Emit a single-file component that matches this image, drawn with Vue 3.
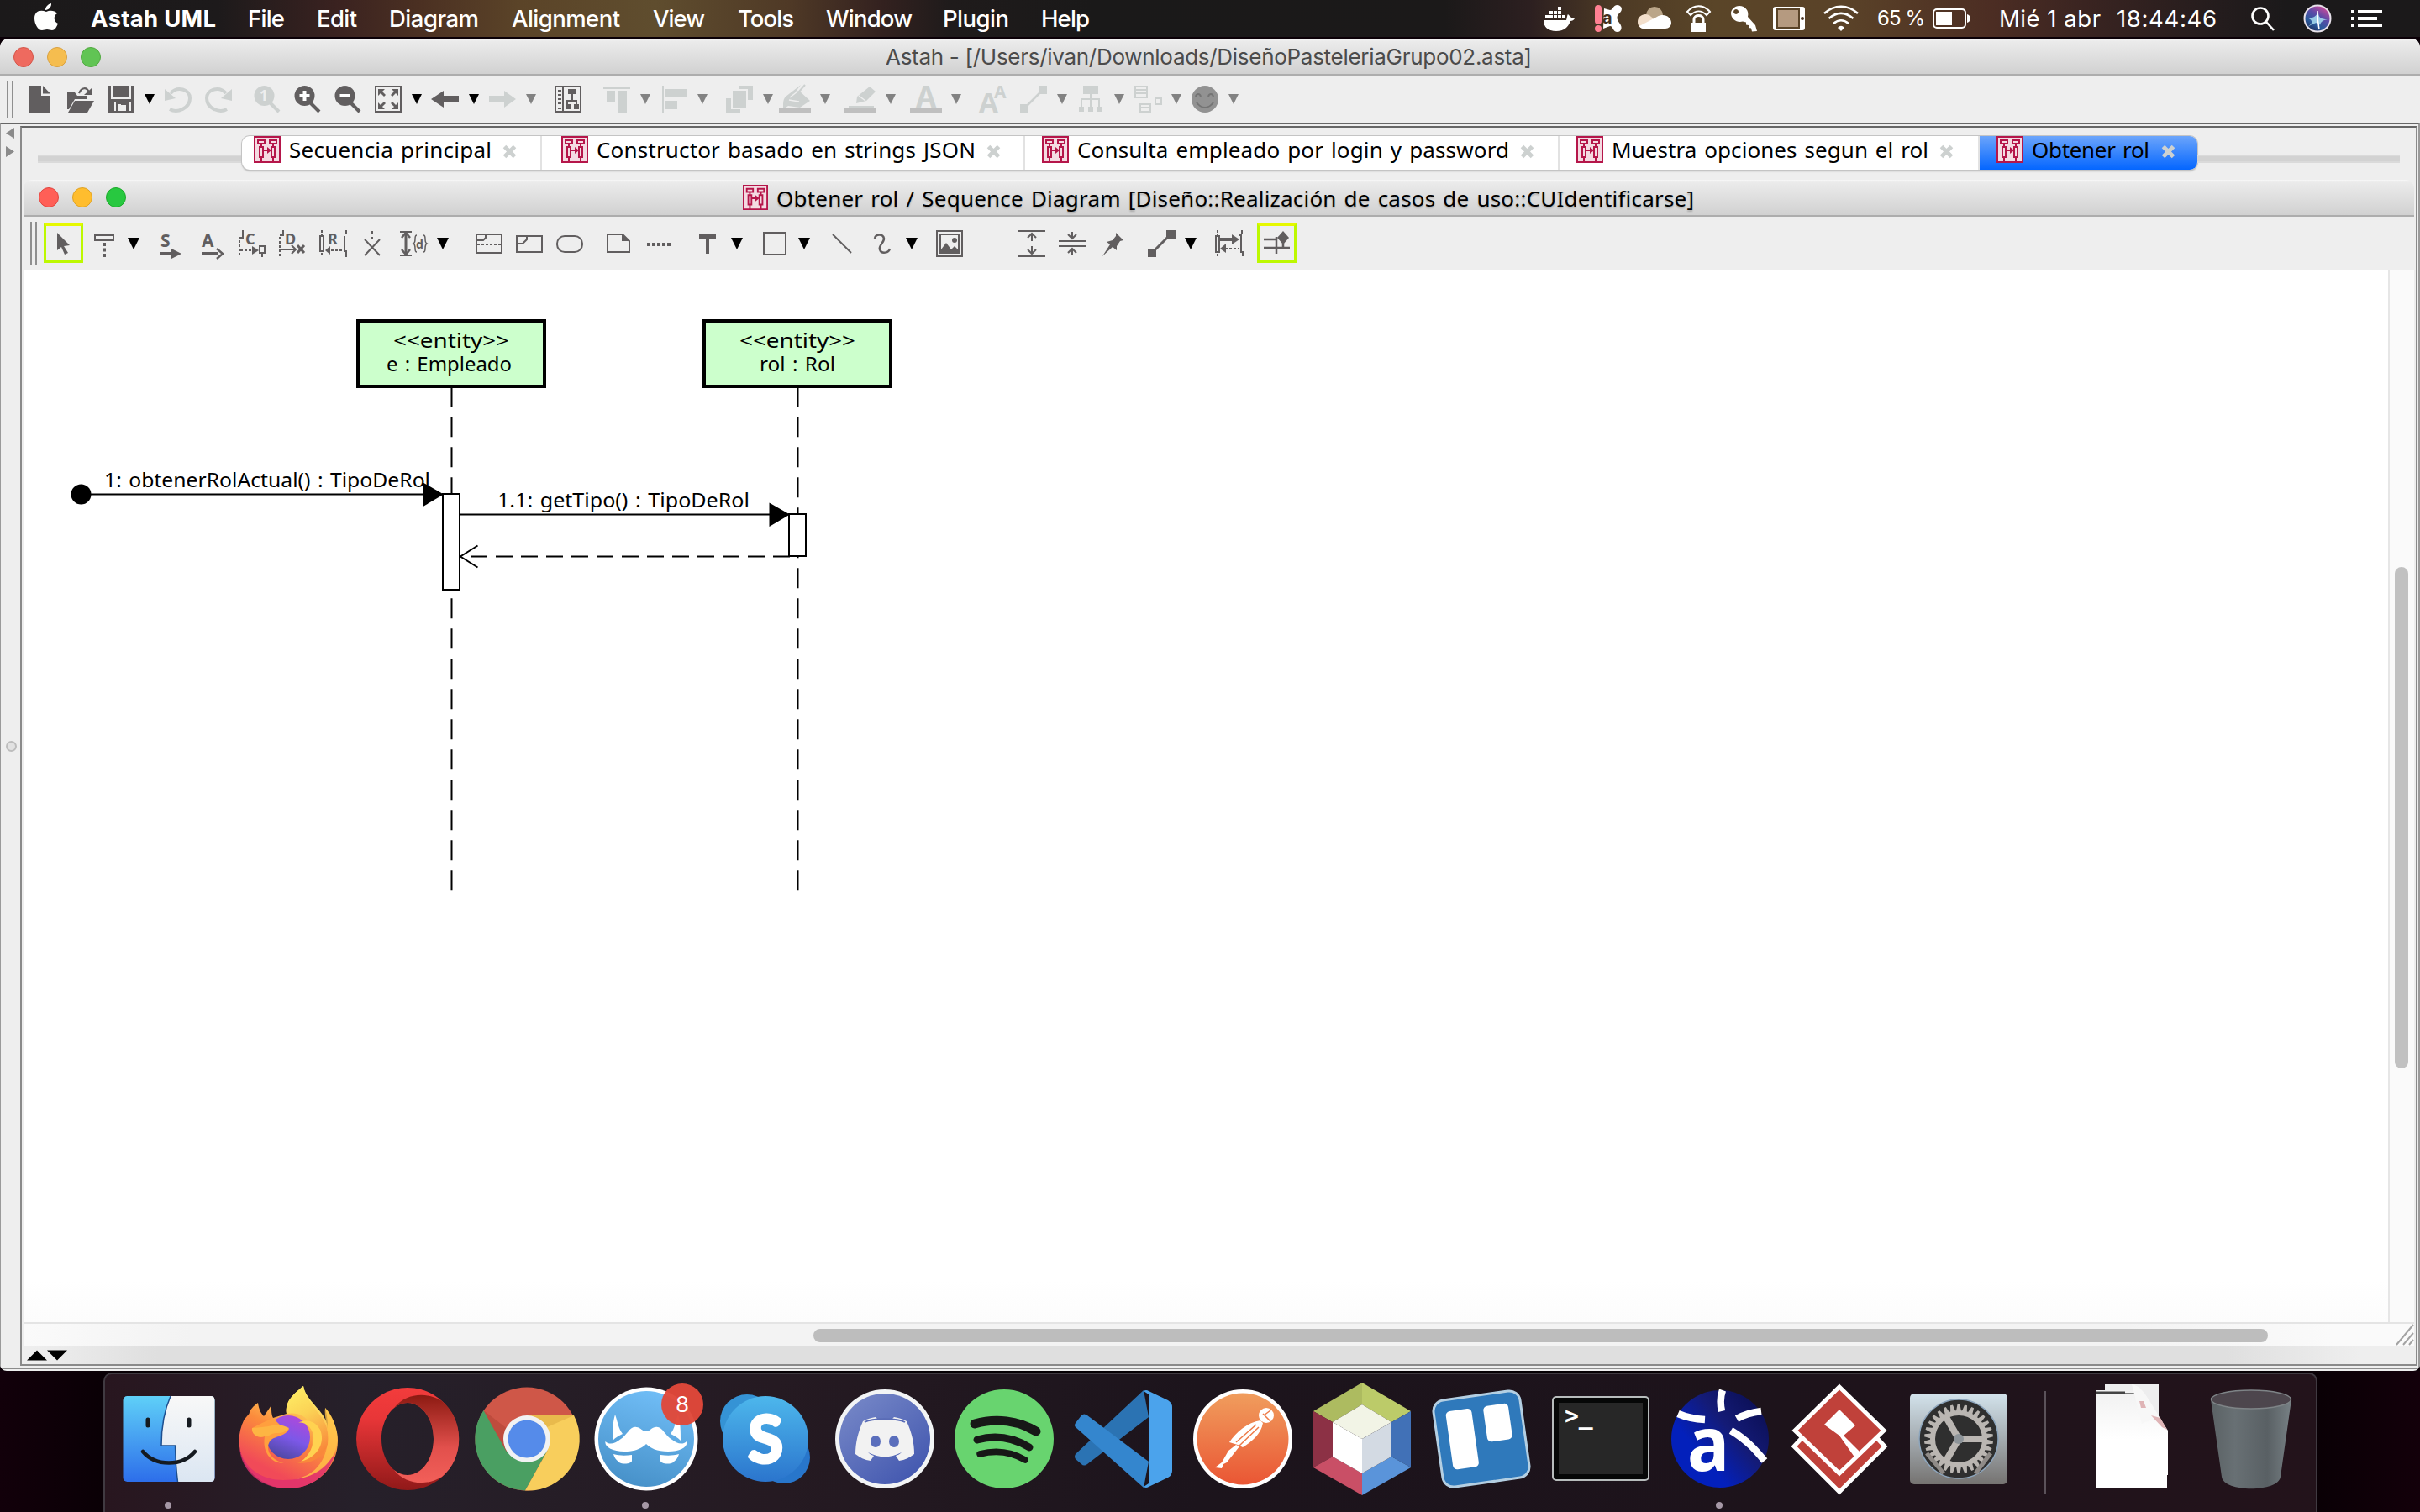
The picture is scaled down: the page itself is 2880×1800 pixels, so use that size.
<script setup>
const vFit = {
  mounted(el, { value }) {
    const chars = el.textContent.trim().length
    const natural = el.getBoundingClientRect().width
    el.style.letterSpacing = (value - natural) / (chars - 1) + 'px'
    el.style.width = value + 'px'
  },
}

// Turns [name, start, end, extra] rows into items with the gap to the previous one.
function flow(rows, origin) {
  let edge = origin
  return rows.map(([name, start, end, extra]) => {
    const item = { name, gap: start - edge, width: end - start, extra }
    edge = end
    return item
  })
}

const menus = flow([
  ['Astah UML', 108, 257, 'bold'], ['File', 295, 339], ['Edit', 377, 425], ['Diagram', 463, 570],
  ['Alignment', 609, 738], ['View', 777, 839], ['Tools', 878, 945], ['Window', 983, 1086],
  ['Plugin', 1122, 1201], ['Help', 1239, 1297],
], 69)

const status = flow([
  ['docker', 1836, 1874], ['avast', 1897, 1931], ['cloud', 1948, 1989], ['lock', 2006, 2037],
  ['key', 2059, 2091], ['display', 2110, 2148], ['wifi', 2170, 2212], ['65 %', 2234, 2291, 'small'],
  ['battery', 2299, 2347], ['Mié 1 abr', 2379, 2500, 'text'], ['18:44:46', 2519, 2638, 'text'],
  ['search', 2678, 2708], ['siri', 2741, 2775], ['list', 2798, 2835],
], 1297)

const W = '#fff'
const statusIcons = {
  docker: `<path fill="${W}" d="M1 24h27c1-3 1-6 2-7l4 4 4 1c-1 2-3 3-5 3-3 8-8 12-17 12C6 37 1 32 1 24zM3 18h4v4H3zM8 18h4v4H8zM13 18h4v4h-4zM18 18h4v4h-4zM8 13h4v4H8zM13 13h4v4h-4zM18 13h4v4h-4zM18 8h4v4h-4zM23 18h3v4h-3z"/>`,
  avast: `<rect x="1" y="6" width="8" height="23" rx="4" fill="#ff8092"/><circle cx="5" cy="34" r="4" fill="#ff8092"/><path fill="${W}" d="M12 10l7 2c4 0 3-6 9-6 6 1 6 6 3 9-5 4-4 8-1 12 5 6 2 11-2 11-6 0-5-7-9-7l-8 3z"/><text x="10" y="28" font-size="20" font-weight="700" fill="#44301f" font-family="Inter">a</text>`,
  cloud: `<circle cx="21" cy="18" r="10" fill="#bba689"/><path d="M1 26c0-8 10-12 16-6 7 3-4 13-10 14-4-1-6-4-6-8z" fill="#f3dfcb"/><path fill="${W}" d="M3 31l21-11c8-5 17 0 17 7 0 4-3 7-7 7H8c-2 0-4-1-5-3z"/>`,
  lock: `<g fill="none" stroke="${W}" stroke-width="2"><path d="M2 14c8-9 19-9 27 0l-4 4c-6-6-13-6-19 0z"/><path stroke-width="3" d="M10 28v-5c0-6 11-6 11 0v5"/></g><path fill="${W}" d="M7 27h17v11H7z"/>`,
  key: `<path fill="${W}" fill-rule="evenodd" d="M11 7c7 0 12 6 10 13l9 10 2 7-6 .5-1-4-3-.5v-3l-3-.5v-3l-4-1c-7 2-14-3-14-10C1 12 5 7 11 7zM7 11a3 3 0 1 0 .1 0z"/>`,
  display: `<path fill="${W}" fill-rule="evenodd" d="M3 8h32a3 3 0 0 1 3 3v22a3 3 0 0 1-3 3H3a3 3 0 0 1-3-3V11a3 3 0 0 1 3-3zm1 2v24h28V10z"/><rect x="6" y="12" width="24" height="20" fill="#b59a80"/><circle cx="35" cy="22" r="2" fill="#4a3525"/>`,
  wifi: `<g fill="none" stroke="${W}" stroke-width="2.6"><path d="M1 16C13 5 29 5 41 16M6.500 22C16 14 26 14 35.500 22M12 28C18 23 24 23 30 28"/></g><path fill="${W}" d="M17 33c3-3 5-3 8 0l-4 4z"/>`,
  battery: `<rect x="2" y="11" width="38" height="22" rx="4" fill="none" stroke="${W}" stroke-width="2"/><path fill="${W}" d="M5 14h19v16H5zM42 17c5 1 5 9 0 10z"/>`,
  search: `<g fill="none" stroke="${W}" stroke-width="2.600"><circle cx="12" cy="19" r="9.500"/><path d="M19 26l9 10"/></g>`,
  siri: `<circle cx="17" cy="22" r="15.500" fill="url(#siri)" stroke="#e7e1ea" stroke-width="2"/><path d="M5 21c7 1 10-1 13-7 0 7 3 9 11 9-6 1-8 3-9 7-2-4-5-4-15 2 6-4 8-7 0-11z" fill="#a8dff2" opacity=".85"/><path d="M17 13c0 8 0 12 2 22" stroke="#fff" stroke-width="1.500" fill="none"/>`,
  list: `<path fill="${W}" d="M0 12h4v4H0zM8 12h29v4H8zM0 20h4v4H0zM8 20h23v4H8zM0 28h4v4H0zM8 28h29v4H8z"/>`,
}

const D = '#615e5f'
const L = '#cdd1d0'
const caret = (c) => `<path fill="${c}" d="M0 10h12l-6 12z"/>`
const T = (x, y, s, c, t) => `<text x="${x}" y="${y}" font-size="${s}" font-weight="700" fill="${c}" font-family="Noto Sans, sans-serif">${t}</text>`
const lens = (c) => `<circle cx="12.500" cy="12" r="12" fill="${c}"/><path d="M19 20l11 11" stroke="${c}" stroke-width="4"/>`

const mainTools = flow([
  ['new', 34, 60], ['open', 80, 112], ['save', 128, 160], ['caret', 172, 184], ['undo', 196, 229],
  ['redo', 243, 276], ['zoom1', 302, 334], ['zoomIn', 350, 382], ['zoomOut', 398, 430], ['fit', 446, 478],
  ['caret', 490, 502], ['back', 513, 546], ['caret', 558, 570], ['forward', 582, 614], ['caretOff', 626, 638],
  ['structure', 660, 692], ['alignTop', 718, 750], ['caretOff', 762, 774], ['alignLeft', 788, 818],
  ['caretOff', 830, 842], ['stack', 864, 896], ['caretOff', 908, 920], ['bucket', 927, 965],
  ['caretOff', 976, 988], ['pen', 1005, 1043], ['caretOff', 1054, 1066], ['fontColor', 1083, 1121],
  ['caretOff', 1132, 1144], ['fonts', 1166, 1198], ['link', 1214, 1246], ['caretOff', 1258, 1270],
  ['tree', 1284, 1311], ['caretOff', 1326, 1338], ['boxes', 1350, 1383], ['caretOff', 1394, 1406],
  ['smile', 1418, 1450], ['caretOff', 1462, 1474],
], 16)

const mainIcons = {
  caret: caret('#000'),
  caretOff: caret('#828282'),
  new: `<path fill="${D}" d="M0 0h15v12h11v20H0zM17 0l9 9.500h-9z"/>`,
  open: `<path fill="${D}" d="M0 8h9l3 4h11v4H9L2 28H0zM9 18h23l-8 14H1z"/><path d="M14 9c3-7 9-8 12-1" fill="none" stroke="${D}" stroke-width="2.200"/><path fill="${D}" d="M29 3v8h-9z"/>`,
  save: `<path fill="${D}" fill-rule="evenodd" d="M0 0h4v16h24V0h4v32H0zM8 19v11h20V19z"/><path fill="${D}" d="M6 0h20v14H6zM10 20h16v12h-4v-9h-8v9h-4z"/><path fill="#eee" d="M13 22h3v8h-3z"/>`,
  undo: `<path d="M6 26c9 5 24-1 24-13C30 2 15-2 7 7" transform="translate(0 2)" fill="none" stroke="${L}" stroke-width="4"/><path fill="${L}" d="M0 4v14l13-3z"/>`,
  redo: `<path d="M27 26C18 31 3 25 3 13 3 2 18-2 26 7" transform="translate(0 2)" fill="none" stroke="${L}" stroke-width="4"/><path fill="${L}" d="M33 4v14l-13-3z"/>`,
  zoom1: lens(L) + T(7, 18, 17, '#eee', '1'),
  zoomIn: lens(D) + `<path d="M12.500 6v12M6.500 12h12" stroke="#fff" stroke-width="4"/>`,
  zoomOut: lens(D) + `<path d="M6.500 12h12" stroke="#fff" stroke-width="4"/>`,
  fit: `<rect x="1" y="1" width="30" height="30" fill="none" stroke="${D}" stroke-width="2"/><path fill="${D}" d="M4 4h8l-3 3 4 4-2 2-4-4-3 3zM28 4h-8l3 3-4 4 2 2 4-4 3 3zM4 28h8l-3-3 4-4-2-2-4 4-3-3zM28 28h-8l3-3-4-4 2-2 4 4 3-3z"/>`,
  back: `<path fill="${D}" d="M0 16L15 6v6h18v8H15v6z"/>`,
  forward: `<path fill="${L}" d="M32 16L18 6v6H0v8h18v6z"/>`,
  structure: `<path fill="none" stroke="${D}" stroke-width="2" d="M1 1h30v30H1zM10 1v30M4 6h4M4 11h4M4 16h4M4 21h4M4 27h4M21 9v9M15 23v-5h11v5"/><path fill="${D}" d="M16 4h10v6H16zM13 22h6v6h-6zM23 22h6v6h-6z"/>`,
  alignTop: `<path fill="${L}" d="M0 2h32v2H0zM4 6h10v14H4zM18 6h10v26H18z"/>`,
  alignLeft: `<path fill="${L}" d="M0 0h2v32H0zM4 4h26v10H4zM4 18h14v10H4z"/>`,
  stack: `<path fill="${L}" d="M15 0h17v17h-6V4H15zM8 6h16v20H8zM0 15h6v13h11v4H0z"/>`,
  bucket: `<path fill="#bfbfbf" d="M0 27h38v6H0z"/><path fill="${L}" d="M5 26c0-6 0-10 3-13L26-1l-6 8 4-1 13 12-12 8-14-2-3 2z"/><path fill="none" stroke="#eee" stroke-width="1.500" d="M13 14l9-7M26 1l5 7M12 17l12 2"/><path fill="none" stroke="${L}" stroke-width="2" d="M31-1l-7 8"/>`,
  pen: `<path fill="#bfbfbf" d="M0 27h38v6H0z"/><path fill="${L}" d="M5 24h30v2H5zM14 21l1-8L30 1l7 6-11 11z"/><path fill="none" stroke="#eee" stroke-width="1.500" d="M17 12l8 6"/>`,
  fontColor: `<path fill="#bfbfbf" d="M0 27h38v6H0z"/>` + T(7, 26, 35, L, 'A'),
  fonts: T(-1, 32, 33, L, 'A') + T(17, 15, 21, L, 'A'),
  link: `<path fill="${L}" d="M22 0h10v10H22zM0 22h10v10H0z"/><path stroke="${L}" stroke-width="2.500" d="M6 26L27 5"/>`,
  tree: `<path fill="${L}" d="M5 0h18v10H5zM0 25h6v6H0zM11 25h6v6h-6zM21 25h6v6h-6z"/><path fill="none" stroke="${L}" stroke-width="2" d="M14 8v18M3 26V16h21v10"/>`,
  boxes: `<path fill="none" stroke="${L}" stroke-width="2" d="M1 1h14v13H1zM1 5h14M1 9h14M7 22h12v9H7zM7 26h12M25 15h7v7h-7z"/>`,
  smile: `<circle cx="16" cy="16" r="16" fill="#929292"/><path fill="none" stroke="#747474" stroke-width="2" d="M5 13c1-4 5-4 6 0M20 13c1-4 5-4 6 0M6 20c6 8 14 8 20 0"/>`,
}

const seqTools = flow([
  ['lifeline', 112, 136], ['caret', 152, 166], ['sync', 191, 216], ['async', 240, 266], ['create', 284, 316],
  ['destroy', 332, 364], ['reply', 380, 413], ['stop', 433, 453], ['duration', 476, 509], ['caret', 520, 534],
  ['fragment', 566, 598], ['use', 614, 646], ['state', 662, 694], ['note', 722, 750], ['anchor', 770, 798],
  ['text', 831, 853], ['caret', 870, 884], ['rect', 908, 936], ['caret', 950, 964], ['line', 989, 1015],
  ['curve', 1039, 1061], ['caret', 1078, 1092], ['image', 1114, 1146], ['expand', 1212, 1244],
  ['compress', 1260, 1292], ['pin', 1312, 1337], ['connector', 1366, 1399], ['caret', 1410, 1424],
  ['messages', 1446, 1478],
], 99)

const S = (d, extra = '', width = 2) => `<path fill="none" stroke="${D}" stroke-width="${width}" ${extra} d="${d}"/>`
const DASH = 'stroke-dasharray="3 2"'
const F = (d) => `<path fill="${D}" d="${d}"/>`
const seqIcons = {
  caret: `<path d="M0 9h14L7 23z"/>`,
  lifeline: S('M1 6h22v6H1z') + S('M12 15v17', 'stroke-dasharray="4 2.500"', 4),
  sync: T(0, 20, 21, D, 'S') + S('M0 28h14', '', 4) + F('M13 22l12 6-12 6z'),
  async: T(0, 20, 21, D, 'A') + S('M0 28h20', '', 4) + S('M18 22l7 6-7 6', '', 2.5),
  create: T(8, 17, 18, D, 'C') + S('M5 0v10M5 9H1') + S('M1 12v20M2 24h18', DASH) + F('M16 19l8 5-8 5z') + S('M25 19h6v8h-6zM28 27v5'),
  destroy: T(7, 17, 18, D, 'D') + S('M5 0v6H1') + S('M1 8v24', DASH) + S('M2 23h18M15 18l5 5-5 5') + S('M22 18l8 9M30 18l-8 9', '', 3),
  reply: T(10, 17, 18, D, 'R') + S('M3 0v6M3 27v5', DASH) + S('M1 7h4v18H1zM32 0v5M30 7v18h2v7') + S('M9 24h19', DASH) + F('M13 19v10l-6-5z'),
  stop: S('M10 1v10', 'stroke-dasharray="4 3"') + S('M1 11l18 19M19 11L1 30'),
  duration: S('M0 2h14M0 30h14') + S('M7 5v22', '', 3) + S('M2 9l5-6 5 6M2 23l5 6 5-6', '', 2.5) + T(19, 22, 14, D, 'd') + S('M20 6c-4 0 0 8-4 10 4 2 0 10 4 10M28 6c4 0 0 8 4 10-4 2 0 10-4 10', '', 1.5),
  fragment: S('M1 5h30v22H1zM1 12h8l3-3V5') + S('M2 17h28', DASH),
  use: S('M1 7h30v19H1zM1 16h7l5-5V7'),
  state: `<rect x="1" y="7" width="30" height="19" rx="9" fill="none" stroke="${D}" stroke-width="2"/>`,
  note: S('M1 5h18l8 8v13H1z') + F('M18 4v9h9z'),
  anchor: S('M0 17h28', 'stroke-dasharray="4 2"', 4),
  text: F('M1 5h20v5h-8v18H9V10H1z'),
  rect: S('M1 3h26v26H1z'),
  line: S('M2 5l22 22'),
  curve: S('M2 10c1-6 10-6 11 0 0 5-7 9-5 13 2 6 11 4 12-1', '', 2.5),
  image: S('M1 1h30v30H1zM5 5h22v22H5z') + F('M6 26v-3l6-8 6 8 4-4 5 5v2z') + `<circle cx="22" cy="12" r="3" fill="${D}"/>`,
  expand: S('M0 1h32M0 31h32M16 5v8M16 19v8M11 9l5-5 5 5M11 23l5 5 5-5'),
  compress: S('M0 13h32M0 19h32M16 2v8M16 22v8M11 5l5 5 5-5M11 27l5-5 5 5'),
  pin: F('M16 3l9 9-4 1-4 6 0 5-5-4L0 31l9-14-4-3 7-2 4-5z'),
  connector: F('M22 0h11v10H22zM0 22h10v10H0z') + S('M6 26L27 5', '', 3),
  messages: S('M3 0v6M3 28v4', DASH) + S('M1 7h4v19H1zM32 0v5M28 6h3v20h2v5') + S('M6 11h16', '', 4) + F('M20 5l9 6-9 6z') + S('M12 22h16', DASH) + F('M13 16v11l-7-5z'),
}

const tabs = [
  { label: 'Secuencia principal', width: 357, pad: 14, gap: 12, text: 241, close: 13 },
  { label: 'Constructor basado en strings JSON', width: 575, pad: 23, gap: 12, text: 451, close: 13 },
  { label: 'Consulta empleado por login y password', width: 636, pad: 20, gap: 12, text: 514, close: 13 },
  { label: 'Muestra opciones segun el rol', width: 500, pad: 20, gap: 12, text: 377, close: 13 },
  { label: 'Obtener rol', width: 259, pad: 20, gap: 12, text: 140, close: 14, active: true },
]

const gearTeeth = Array.from({ length: 30 }, (_, i) => `<path transform="rotate(${i * 12})" fill="#b9b5b1" d="M-3-33l1.500-8h3l1.500 8z"/>`).join('')

const dockApps = [
  { name: 'Finder', running: true, art: `
    <rect x="-54.500" y="-51" width="109" height="102" rx="5" fill="url(#finder)"/>
    <path d="M2-51H50q4.500 0 4.500 5V46q0 5-4.500 5H10.500Q8 32 7.500 8H-9Q-9-26 2-51z" fill="url(#finderR)"/>
    <path d="M2-51Q-9-26-9 8H7.500Q8 32 10.500 51" fill="none" stroke="#1d4f8f" stroke-width="1.500"/>
    <path d="M-25-23v7M24-23v7" stroke="#151a20" stroke-width="5" stroke-linecap="round"/>
    <path d="M-31 15C-16 33 16 33 31 15" fill="none" stroke="#151a20" stroke-width="4.500" stroke-linecap="round"/>` },
  { name: 'Firefox', art: `
    <path d="M-36-43c1 8 4 13 7 16l9-13c0 7 0 11 2 15L-2-30C-4-45 6-53 18-63c2 13 16 24 22 33 5 7 7 12 7 18 0-10-1-17-3-25C56-22 59-8 59 2c0 32-26 57-59 57S-58.500 33-58.500 2c0-8 2-17 6-25l6-7c1-5 5-9 10.500-13z" fill="url(#fox)"/>
    <path d="M-58 10c5 26 28 39 52 39 30 0 48-12 62-32C48 44 26 59 0 59-34 59-56 38-58 10z" fill="#e0306f" opacity=".8"/>
    <circle cx="0" cy="-2" r="26" fill="url(#foxGlobe)"/>
    <path d="M18-63C6-53-4-45-2-30c24-4 34 14 30 36 0 12-7 21-17 23C38 30 52 10 47-8 45-28 22-40 18-63z" fill="url(#foxTail)"/>
    <path d="M44-37c-2 10 5 26 3 43C42 32 28 44 8 48c36-4 54-32 50-54-2-12-6-23-14-31z" fill="#ffc247" opacity=".8"/>
    <path d="M12-19c6-2 16 4 18 15 1 12-5 24-15 31 22-6 29-24 23-38-5-10-17-14-26-8z" fill="#ffd250"/>
    <path d="M-18-25l-13 6-12 6C-44-6-36 0-28-3c-3 17 6 32 23 32C-20 25-28 13-22 3-17-4-4-2 1-12-8-13-13-20-18-25z" fill="#ff9f3e"/>
    <path d="M-43-13C-44-6-36 0-28-3c7 0 7-4 14-4 8 0 12-2 15-6-7-3-12-5-20-3-9 2-14 2-24 3z" fill="#fdb543"/>` },
  { name: 'Opera', art: `
    <path fill-rule="evenodd" fill="url(#opera)" d="M0-61a61 61 0 1 0 .1 0zM0-43c17 0 31 19 31 43S17 43 0 43-31 24-31 0-17-43 0-43z"/>
    <path fill="url(#operaIn)" d="M-16-37C-2-55 24-56 41-45 68-23 68 23 41 45 24 56-2 55-16 37-11 41-6 43 0 43c17 0 31-19 31-43S17-43 0-43c-6 0-11 2-16 6z"/>` },
  { name: 'Chrome', art: `
    <circle r="61.500" fill="#cf5748"/>
    <path d="M-51.500-34A61.500 61.500 0 0 0-2 61.500L24.500 14-24.500 14z" fill="#4a9f62"/>
    <path d="M56-28A61.500 61.500 0 0 1-2 61.500L24.500 14 0-28z" fill="#f8ce5c"/>
    <path d="M-51.500-34L-24 16l6-24z" fill="#b34537" opacity=".6"/>
    <path d="M0-28h56L24-14z" fill="#d9a63c" opacity=".5"/>
    <circle r="28" fill="#f1f2f3"/><circle r="22.500" fill="#558bea"/>` },
  { name: 'Mail chat', running: true, badge: 8, art: `
    <circle r="61.500" fill="#fff"/><circle r="57" fill="url(#viking)"/>
    <path d="M-37-29c3 8 4 17 9 23-4 2-8 4-12 8 0-11 0-21 3-31zM38-29c-3 8-4 17-9 23 4 2 8 4 12 8 0-11 0-21-3-31z" fill="#fff"/>
    <path d="M-48.500 3c5 5 12 2 17-2 9-5 12-17 20-15C-7-14-3-8 0-9c3 1 7-5 11-5 8-2 11 10 20 15 5 4 12 7 17 2 2 6-7 12-22 12C13 15 5 11 0 6c-5 5-13 9-26 9-15 0-24-6-22.500-12z" fill="#fff"/>
    <path d="M-39 18c7 2 14 2 22 1v7c0 4-13 5-16 1-3-2-5-5-6-9zM39 18c-7 2-14 2-22 1v7c0 4 13 5 16 1 3-2 5-5 6-9z" fill="#fff"/>` },
  { name: 'Skype', art: `
    <circle cx="-22" cy="-21" r="32" fill="#3593d5"/><circle cx="22" cy="22" r="31" fill="#2876cb"/>
    <circle r="51" fill="url(#skype)"/>
    <text x="0" y="28" text-anchor="middle" font-family="Lato, sans-serif" font-weight="700" font-size="76" fill="#fff" stroke="#fff" stroke-width="4" stroke-linejoin="round">S</text>` },
  { name: 'Discord', art: `
    <circle r="59" fill="#f2f4f5"/><circle r="54" fill="url(#discord)"/>
    <path d="M-26-21c5-3 10-4 15-5l3 3c5-1 11-1 16 0l3-3c5 1 10 2 15 5 6 13 9 26 9 39-5 4-11 7-18 8l-4-6c3-1 5-2 7-4-14 7-26 7-40 0 2 2 4 3 7 4l-4 6c-7-1-13-4-18-8 0-13 3-26 9-39z" fill="#f2f2f2"/>
    <path d="M-24-20c9-5 39-5 48 0" fill="none" stroke="#5a6cb6" stroke-width="2"/>
    <ellipse cx="-11" cy="3" rx="6" ry="7" fill="#5a6ebc"/><ellipse cx="11" cy="3" rx="6" ry="7" fill="#5a6ebc"/>` },
  { name: 'Spotify', art: `
    <circle r="59" fill="#68d46f"/>
    <g fill="none" stroke="#171817" stroke-linecap="round"><path d="M-35-18C-10-25 16-22 38-9" stroke-width="11"/><path d="M-32 1C-10-5 10-2 30 10" stroke-width="9"/><path d="M-29 18C-10 13 8 15 25 25" stroke-width="7.500"/></g>` },
  { name: 'Code', art: `
    <path d="M-57 18L24-58 30-26-43 30q-4 3-7 0l-7-6q-2-3 0-6z" fill="#2b73b3"/>
    <path d="M-57-19l7-9q3-3 7 0L30 27 24 58-57-14q-2-2 0-5z" fill="#3486ce"/>
    <path d="M24-57q3-2 6 0l23 11q5 3 5 8v76q0 5-5 8L30 57q-3 2-6 0l6-4v-106z" fill="#4ba3ec"/>` },
  { name: 'Postman', art: `
    <circle r="59" fill="#fff"/><circle r="54.500" fill="url(#postman)"/>
    <g fill="#fff"><circle cx="28" cy="-28" r="9"/><path d="M21-22l3 3C22-6 10 4 0 10l-6-3-10-3C-8-8 6-20 21-22zM-4 9l-15 19-4 2-2 5-8-1 8-6 8-14 9-7z"/></g>
    <path d="M-8 4L16-17M-4 8L19-14M24-30l9 9M33-34l-8 6" stroke="#ee7a47" stroke-width="1.500"/>` },
  { name: 'NetBeans', art: `
    <path d="M0-67V-41L-35-20-58-33z" fill="#adbb60"/><path d="M0-67V-41L35-20 58-33z" fill="#bccb69"/>
    <path d="M-58-33l23 13V21L-58 34z" fill="#8c3145"/><path d="M58-33L35-20V21l23 13z" fill="#4171b7"/>
    <path d="M-58 34l23-13L0 41v26z" fill="#c94f66"/><path d="M58 34L35 21 0 41v26z" fill="#5a94da"/>
    <path d="M0-41l35 21L0 0l-35-20z" fill="#f2f4e6"/><path d="M-35-20L0 0v41l-35-20z" fill="#fff"/><path d="M35-20L0 0v41l35-20z" fill="#d3dae3"/>` },
  { name: 'Trello', art: `
    <g transform="rotate(-8)"><rect x="-52" y="-52" width="104" height="104" rx="13" fill="#2f79bb" stroke="#b4cfe2" stroke-width="3"/>
    <rect x="-38" y="-38" width="31" height="70" rx="5" fill="#fff"/><rect x="7" y="-38" width="30" height="43" rx="5" fill="#fff"/></g>` },
  { name: 'Terminal', art: `
    <rect x="-57" y="-50" width="114" height="99" rx="4" fill="#060707" stroke="#b7bcbc" stroke-width="2"/>
    <rect x="-50" y="-43" width="100" height="85" fill="#272727"/>
    <text x="-43" y="-18" font-family="DejaVu Sans Mono, monospace" font-weight="700" font-size="28" fill="#fff">&gt;_</text>` },
  { name: 'Astah', running: true, art: `
    <circle r="58" fill="url(#astah)"/>
    <path d="M3-58c-3 8-3 16-1 25M-50-30q14 6 32 7M20-24q12-7 29-9M13-10c20 12 30 24 40 36" fill="none" stroke="#fff" stroke-width="8.500"/>
    <text x="-39" y="38" font-family="Noto Sans, sans-serif" font-weight="700" font-size="90" textLength="50" lengthAdjust="spacingAndGlyphs" fill="#fff">a</text>` },
  { name: 'Visual Paradigm', art: `
    <path d="M0-47L54 12 0 66-54 12z" transform="translate(0 -3)" fill="#c0413a" stroke="#fff" stroke-width="5"/>
    <path d="M0-62L53-10 0 41-53-10z" fill="#c0413a" stroke="#fff" stroke-width="5"/>
    <path d="M0-35L19-16 5-4 26 17l-7 6L0-4-18-17z" fill="#fff"/>` },
  { name: 'System Preferences', art: `
    <rect x="-58" y="-54" width="116" height="108" rx="5" fill="url(#prefs)"/>
    <circle r="47" fill="#2f2f2f" stroke="#8ea6bd" stroke-width="1.500"/>
    ${gearTeeth}<circle r="31" fill="none" stroke="#bab6b2" stroke-width="6"/>
    <path d="M0 0h30M0 0L-15-26M0 0l-15 26" stroke="#bab6b2" stroke-width="8"/><circle r="6" fill="#8d9499"/>
    <path d="M-38 17l20 24M38 17L20 41" stroke="#8f8b88" stroke-width="5"/>` },
]

const dockExtras = [
  { name: 'Documents', art: `
    <path d="M-32-65h64v40h-64z" fill="#ededee"/>
    <path d="M-43-58H8L43-10V43h-1v16h-85z" fill="url(#paper)"/>
    <path d="M-42-55H-8" stroke="#444" stroke-width="3"/><path d="M-8-54H12" stroke="#555" stroke-width="1.500"/>
    <path d="M0-65C14-63 20-46 43-10 36-20 26-26 12-18z" fill="#f7f7f7"/><path d="M9-45l5 0 3 8h-6zM23-28l11 3 8 14-6-3z" fill="#dfb4b6"/>` },
  { name: 'Trash', art: `
    <path d="M-48-47L-35 45C-33 64 33 64 35 45L48-47z" fill="url(#trash)"/>
    <ellipse cy="-47" rx="47.500" ry="11" fill="#4d464d" stroke="#7e8487" stroke-width="1.500"/>` },
]
</script>

<template>
  <div class="screen">
    <svg class="defs" width="0" height="0">
      <defs>
        <linearGradient id="finder" x2="0" y2="1"><stop stop-color="#5fd0f8" /><stop offset="1" stop-color="#2d6eea" /></linearGradient>
        <linearGradient id="finderR" x2="0" y2="1"><stop stop-color="#f8f8f8" /><stop offset="1" stop-color="#dbe6f2" /></linearGradient>
        <linearGradient id="fox" x1=".8" y1="0" x2=".3" y2="1"><stop offset=".1" stop-color="#fff36a" /><stop offset=".5" stop-color="#fb8b3c" /><stop offset=".85" stop-color="#f14a58" /></linearGradient>
        <linearGradient id="foxTail" x2=".3" y2="1"><stop stop-color="#fff268" /><stop offset=".45" stop-color="#fbd255" /><stop offset="1" stop-color="#f9883b" /></linearGradient>
        <linearGradient id="foxGlobe" x1=".7" x2=".3" y2="1"><stop stop-color="#b048da" /><stop offset=".5" stop-color="#7c58e8" /><stop offset="1" stop-color="#4c479f" /></linearGradient>
        <linearGradient id="opera" x2="0" y2="1"><stop stop-color="#f33c3c" /><stop offset=".3" stop-color="#e83638" /><stop offset="1" stop-color="#911919" /></linearGradient>
        <linearGradient id="operaIn" x2="0" y2="1"><stop stop-color="#8c1a12" /><stop offset=".6" stop-color="#e2504c" /><stop offset="1" stop-color="#f25f59" /></linearGradient>
        <linearGradient id="viking" x1=".6" x2=".3" y2="1"><stop stop-color="#70bdf6" /><stop offset="1" stop-color="#4690c8" /></linearGradient>
        <linearGradient id="skype" x2="0" y2="1"><stop stop-color="#4db7ec" /><stop offset="1" stop-color="#2b75cd" /></linearGradient>
        <linearGradient id="discord" x2=".8" y2="1"><stop stop-color="#7a8bc9" /><stop offset="1" stop-color="#4257af" /></linearGradient>
        <linearGradient id="postman" x2="0" y2="1"><stop stop-color="#f09d5d" /><stop offset="1" stop-color="#ea5634" /></linearGradient>
        <linearGradient id="astah" x1=".85" y1=".1" x2=".25" y2=".6"><stop stop-color="#0c1058" /><stop offset=".5" stop-color="#141b77" /><stop offset="1" stop-color="#0320bb" /></linearGradient>
        <linearGradient id="prefs" x2="0" y2="1"><stop stop-color="#d3e3ec" /><stop offset=".5" stop-color="#a4abb0" /><stop offset="1" stop-color="#757371" /></linearGradient>
        <linearGradient id="paper" x2="0" y2="1"><stop stop-color="#f1f1f1" /><stop offset=".5" stop-color="#fff" /></linearGradient>
        <linearGradient id="trash"><stop stop-color="#5b6265" /><stop offset=".3" stop-color="#687074" /><stop offset=".7" stop-color="#596064" /><stop offset="1" stop-color="#778084" /></linearGradient>
        <linearGradient id="siri" x1=".8" x2=".2" y2="1"><stop stop-color="#de4a97" /><stop offset=".4" stop-color="#5b4ba8" /><stop offset=".7" stop-color="#2a5a9c" /><stop offset="1" stop-color="#1b2452" /></linearGradient>
        <symbol id="seq" viewBox="0 0 32 32">
          <path d="M1 1h30v30H1z" fill="#f4dbe2" stroke="#b5164a" stroke-width="2" />
          <path d="M5 5h8v4H5zM19 5h8v4h-8zM9 9v3M23 9v3M7 13h4v12H7zM21 13h4v12h-4zM9 25v6M23 25v6M11 17h8" fill="none" stroke="#b5164a" stroke-width="2" />
          <path d="M16 13l5 4-5 4z" fill="#b5164a" />
        </symbol>
      </defs>
    </svg>

    <header class="menubar">
      <svg class="apple" width="28" height="44" viewBox="0 0 28 44">
        <path fill="#fff" d="M20 4c.5 4-3 8-7 8 0-4 3-7 7-8zM27 16c-5 3-4 10 1 12-2 5-4 8-7 8-2 0-4-1-6-1s-4 1-6 1C4 36 0 28 0 22c0-8 6-11 14-8 4-2 10-2 13 2z" />
      </svg>
      <span v-for="m in menus" :key="m.name" v-fit="m.width" class="menu" :class="m.extra" :style="{ marginLeft: m.gap + 'px' }">{{ m.name }}</span>
      <template v-for="s in status" :key="s.name">
        <span v-if="s.extra" v-fit="s.width" class="menu" :class="s.extra" :style="{ marginLeft: s.gap + 'px' }">{{ s.name }}</span>
        <svg v-else height="44" :width="s.width" :style="{ marginLeft: s.gap + 'px' }" v-html="statusIcons[s.name]" />
      </template>
    </header>

    <main class="window">
      <div class="titlebar outer">
        <i class="light red" /><i class="light amber" /><i class="light green" />
        <span v-fit="769" class="path">Astah - [/Users/ivan/Downloads/DiseñoPasteleriaGrupo02.asta]</span>
      </div>

      <div class="toolbar main-tools">
        <i class="grip" />
        <svg v-for="(t, i) in mainTools" :key="i" height="34" :width="t.width" :style="{ marginLeft: t.gap + 'px' }" v-html="mainIcons[t.name]" />
      </div>

      <div class="workspace">
        <aside class="rail">
          <svg width="14" height="38" viewBox="0 0 14 38"><path fill="#8b8b8b" d="M11 1v13L1 7.500zM1 23v13l10-6.500z" /></svg>
          <i class="knob" />
        </aside>

        <section class="editor">
          <div class="tabstrip">
            <i class="track left" />
            <div class="tabs">
              <div v-for="t in tabs" :key="t.label" class="tab" :class="{ active: t.active }" :style="{ width: t.width + 'px', paddingLeft: t.pad + 'px' }">
                <svg width="32" height="32"><use href="#seq" /></svg>
                <span v-fit="t.text" class="label" :style="{ marginLeft: t.gap - 2 + 'px' }">{{ t.label }}</span>
                <svg width="17" height="17" viewBox="0 0 17 17" :style="{ marginLeft: t.close + 'px' }"><path d="M2.500 2.500l12 12M14.500 2.500l-12 12" stroke="#cdd1d0" stroke-width="5" /></svg>
              </div>
            </div>
            <i class="track right" />
          </div>

          <div class="frame">
            <div class="titlebar inner">
              <i class="light red" /><i class="light amber" /><i class="light green" />
              <svg class="kind" width="30" height="30"><use href="#seq" /></svg>
              <span v-fit="1092" class="label">Obtener rol / Sequence Diagram [Diseño::Realización de casos de uso::CUIdentificarse]</span>
            </div>

            <div class="toolbar seq-tools">
              <i class="grip" />
              <span class="pick arrow"><svg width="41" height="41" viewBox="0 0 41 41"><path fill="#615e5f" d="M13 8l15 15-7 1 5 8-4 2-4-9-5 4z" /></svg></span>
              <svg v-for="(t, i) in seqTools" :key="i" height="34" :width="t.width" :style="{ marginLeft: t.gap + 'px' }" v-html="seqIcons[t.name]" />
              <span class="pick last"><svg width="41" height="41" viewBox="0 0 41 41"><path fill="none" stroke="#615e5f" stroke-width="2.500" d="M5 16h14M5 26h31M20 13v20M28 16v10" /><path fill="#615e5f" d="M28 6l7 8-7 8-7-8z" /></svg></span>
            </div>

            <div class="view">
              <svg class="canvas" width="2814" height="1252" viewBox="28 322 2814 1252">
                <g stroke="#000" stroke-width="2" fill="none">
                  <path d="M537.500 460.300V1060.300M949.500 460.300V1060.300" stroke-dasharray="24 12" />
                  <path d="M108 588.500H504M548 612.500H916" />
                  <path d="M940 662.500H550" stroke-dasharray="20 10" />
                  <path d="M568.500 649.500L548 662.500l20.500 13" />
                  <path fill="#fff" d="M527 588h20v114h-20zM939 612h20v50h-20z" />
                </g>
                <circle cx="96.500" cy="588.500" r="12" />
                <path d="M503.500 574.500L528 588.500l-24.500 14.500zM915.500 598.500L940 612.500 915.500 627z" />
                <path fill="#ccffcc" stroke="#000" stroke-width="4" d="M426 382h222v78H426zM838 382h222v78H838z" />
                <g class="uml">
                  <text x="468" y="414" textLength="138" lengthAdjust="spacingAndGlyphs">&lt;&lt;entity&gt;&gt;</text>
                  <text x="460" y="442" textLength="149" lengthAdjust="spacingAndGlyphs">e : Empleado</text>
                  <text x="880" y="414" textLength="138" lengthAdjust="spacingAndGlyphs">&lt;&lt;entity&gt;&gt;</text>
                  <text x="904" y="442" textLength="90" lengthAdjust="spacingAndGlyphs">rol : Rol</text>
                  <text x="124" y="580" textLength="388" lengthAdjust="spacingAndGlyphs">1: obtenerRolActual() : TipoDeRol</text>
                  <text x="592" y="604" textLength="300" lengthAdjust="spacingAndGlyphs">1.1: getTipo() : TipoDeRol</text>
                </g>
              </svg>
              <div class="vscroll"><i /></div>
            </div>
            <div class="hscroll">
              <i />
              <svg width="22" height="28" viewBox="0 0 22 28"><path d="M1 26L21 2M9 26L21 12M16 26l5-6" stroke="#a3a3a3" stroke-width="2" /></svg>
            </div>
            <div class="statusbar">
              <svg width="52" height="14" viewBox="0 0 52 14"><path d="M4 12.500L16 .5l12 12zM28 .5h24l-12 12z" /></svg>
            </div>
          </div>
        </section>
      </div>
    </main>

    <footer class="desk">
      <nav class="dock">
        <div v-for="a in dockApps" :key="a.name" class="app">
          <svg width="142" height="166" viewBox="-71 -79 142 166" v-html="a.art" />
          <span v-if="a.badge" class="badge">{{ a.badge }}</span>
          <i v-if="a.running" class="dot" />
        </div>
        <i class="divider" />
        <div v-for="a in dockExtras" :key="a.name" class="app">
          <svg width="142" height="166" viewBox="-71 -79 142 166" v-html="a.art" />
        </div>
      </nav>
    </footer>
  </div>
</template>

<style>
body {
  margin: 0;
  background: #0c0008;
}
</style>

<style scoped>
.screen {
  width: 2880px;
  height: 1800px;
  overflow: hidden;
  display: flex;
  flex-direction: column;
  background: #0b0007;
  font-family: Inter, "Liberation Sans", sans-serif;
}
.defs {
  position: absolute;
}
svg {
  flex: none;
  overflow: visible;
}
i {
  display: block;
  flex: none;
}
.menubar {
  height: 44px;
  flex: none;
  margin-bottom: 2px;
  display: flex;
  align-items: center;
  background: linear-gradient(90deg, #1b191a 0, #1d1a1b 260px, #3a2220 400px, #4b3022 500px, #5b4428 620px, #5f4d2e 780px, #4f3926 940px, #33211f 1050px, #1f1b1b 1130px, #1a1919 1300px, #1b1919 1720px, #2c1f20 1820px, #4d3a25 1920px, #5a4528 2040px, #5a4228 2200px, #4c2d23 2370px, #3a2421 2480px, #241c1d 2640px, #1b191a 2720px);
}
.apple {
  margin-left: 41px;
}
.menu {
  flex: none;
  white-space: nowrap;
  color: #fff;
  font-size: 27.5px;
  line-height: 44px;
  font-weight: 450;
}
.menu.bold {
  font-weight: 700;
}
.menu.small {
  font-size: 24px;
  font-weight: 400;
}
.menu.text {
  font-weight: 400;
}
.window {
  height: 1586px;
  flex: none;
  display: flex;
  flex-direction: column;
  background: #eee;
  border-radius: 10px 10px 8px 8px;
  overflow: hidden;
}
.titlebar {
  box-sizing: border-box;
  height: 44px;
  flex: none;
  display: flex;
  align-items: center;
  background: linear-gradient(#f8f8f8 0, #ebebeb 3px, #d1d1d1 100%);
  border-bottom: 2px solid #adadad;
}
.titlebar.outer {
  padding: 2px 0 0 16px;
}
.light {
  width: 24px;
  height: 24px;
  border-radius: 50%;
  margin-right: 16px;
  box-sizing: border-box;
  border: 1px solid;
}
.outer .red { background: #ee6a5f; border-color: #d35549; }
.outer .amber { background: #f5bd4f; border-color: #d8a040; }
.outer .green { background: #61c454; border-color: #52a941; }
.inner .red { background: #ff5f57; border-color: #e0443e; }
.inner .amber { background: #ffbd2e; border-color: #dea123; }
.inner .green { background: #28c840; border-color: #1aab29; }
.path {
  margin-left: 918px;
  flex: none;
  white-space: nowrap;
  color: #4b4b4b;
  font-size: 26px;
  line-height: 42px;
}
.toolbar {
  display: flex;
  align-items: center;
  flex: none;
}
.main-tools {
  height: 56px;
  padding-left: 8px;
}
.main-tools svg {
  margin-top: 2px;
}
.grip {
  width: 4px;
  height: 44px;
  border: solid #8f8f8f;
  border-width: 0 2px;
}
.workspace {
  box-sizing: border-box;
  height: 1484px;
  flex: none;
  display: flex;
  border: solid #9a9a9a;
  border-width: 2px 2px 2px 1px;
  border-top-color: #666;
  border-bottom-color: #8c8c8c;
  padding: 2px 2px 2px 0;
}
.rail {
  width: 23px;
  flex: none;
  display: flex;
  flex-direction: column;
}
.rail svg {
  margin: 1px 0 0 5px;
}
.knob {
  width: 9px;
  height: 9px;
  margin: 693px 0 0 6px;
  border-radius: 50%;
  border: 2px solid #bdbdbd;
  background: #e2e2e2;
}
.editor {
  flex: 1;
  box-sizing: border-box;
  border: 2px solid #8a8a8a;
  border-top-color: #666;
  padding: 0 2px;
  display: flex;
  flex-direction: column;
}
.tabstrip {
  height: 62px;
  flex: none;
  display: flex;
  align-items: flex-start;
}
.track {
  margin-top: 32px;
  height: 6px;
  background: #d2d2d2;
  border: solid #dadada;
  border-width: 2px 0;
}
.track.left {
  margin-left: 17px;
  width: 243px;
}
.track.right {
  width: 241px;
}
.tabs {
  display: flex;
  margin-top: 10px;
  height: 40px;
  width: 2327px;
  flex: none;
  border-radius: 9px;
  background: #fff;
  box-shadow: 0 0 0 1px #c4c4c4, 0 2px 2px #bbb;
  overflow: hidden;
}
.tab {
  box-sizing: border-box;
  flex: none;
  height: 40px;
  display: flex;
  align-items: center;
  border-right: 2px solid #e2e2e2;
}
.tab > svg:first-child {
  margin-top: -8px;
}
.tab > svg:last-child {
  margin-top: -4px;
}
.tab.active {
  border-right: 0;
  background: linear-gradient(#6ca5fb, #0466ff);
}
.label {
  flex: none;
  white-space: nowrap;
  font-family: "Noto Sans", "Open Sans", sans-serif;
  font-size: 26px;
  line-height: 30px;
  word-spacing: 2px;
  color: #000;
}
.tab .label {
  margin-top: -8px;
}
.frame {
  flex: 1;
  display: flex;
  flex-direction: column;
  background: #eee;
}
.titlebar.inner {
  padding-left: 18px;
  border-radius: 10px 10px 0 0;
}
.kind {
  margin-left: 718px;
  margin-top: -1px;
}
.inner .label {
  margin-left: 10px;
  margin-top: 2px;
  text-shadow: 0 2px 2px rgba(0, 0, 0, 0.2);
}
.seq-tools {
  height: 64px;
  padding-left: 8px;
}
.seq-tools .grip {
  height: 52px;
}
.seq-tools svg {
  margin-top: 1px;
}
.pick {
  border: 3px solid #bdf800;
  border-top-color: #e6f800;
  width: 41px;
  height: 41px;
  display: block;
  flex: none;
  margin-top: -1px;
}
.pick svg {
  display: block;
  margin: 0;
}
.pick.arrow {
  margin-left: 8px;
}
.pick.last {
  margin-left: 18px;
}
.view {
  display: flex;
  height: 1252px;
  flex: none;
}
.canvas {
  background: linear-gradient(#fff 96%, #fcfcfc);
  display: block;
}
.uml {
  font-family: "Noto Sans", "Open Sans", sans-serif;
  font-size: 24px;
  word-spacing: 2px;
  fill: #000;
}
.vscroll {
  box-sizing: border-box;
  flex: 1;
  border-left: 2px solid #e6e6e6;
  background: #fafafa;
}
.vscroll i {
  width: 16px;
  height: 597px;
  margin: 353px 0 0 6px;
  border-radius: 8px;
  background: #c1c1c1;
}
.hscroll {
  box-sizing: border-box;
  height: 28px;
  flex: none;
  border-top: 2px solid #e4e4e4;
  background: linear-gradient(90deg, #fafafa, #f3f3f3 200px, #f3f3f3 2500px, #fafafa 2750px);
  display: flex;
  align-items: center;
}
.hscroll i {
  width: 1731px;
  height: 16px;
  margin: 2px 152px 0 940px;
  border-radius: 8px;
  background: #bdbdbd;
}
.statusbar {
  height: 22px;
  flex: none;
  display: flex;
  align-items: center;
  background: linear-gradient(90deg, #eee 10px, #dfdfdf 160px, #dfdfdf 2620px, #eee 2780px);
}
.statusbar svg {
  margin-top: 2px;
}
.desk {
  flex: 1;
  background: linear-gradient(90deg, #12000a, #050003 200px, #050003 2700px, #13000a);
}
.dock {
  box-sizing: border-box;
  width: 2635px;
  height: 168px;
  margin: 2px 0 0 123px;
  padding-left: 5px;
  border: 2px solid #403a41;
  border-bottom: 0;
  border-radius: 10px 10px 0 0;
  display: flex;
  background: linear-gradient(90deg, #28161f, #26202a 300px, #251a22 800px, #1c141c 1300px, #1d131b 2000px, #23131b);
}
.app {
  position: relative;
  width: 142px;
  height: 166px;
  flex: none;
}
.app svg {
  display: block;
  margin-top: -2px;
}
.badge {
  position: absolute;
  left: 89px;
  top: 11px;
  width: 50px;
  height: 50px;
  border-radius: 50%;
  background: rgba(224, 72, 58, 0.97);
  color: #fff;
  font-size: 26px;
  line-height: 50px;
  text-align: center;
}
.dot {
  position: absolute;
  left: 66px;
  top: 152px;
  width: 8px;
  height: 8px;
  border-radius: 50%;
  background: #a698a6;
}
.divider {
  width: 2px;
  height: 122px;
  margin: 20px 31px 0;
  background: #5b525a;
}
</style>
